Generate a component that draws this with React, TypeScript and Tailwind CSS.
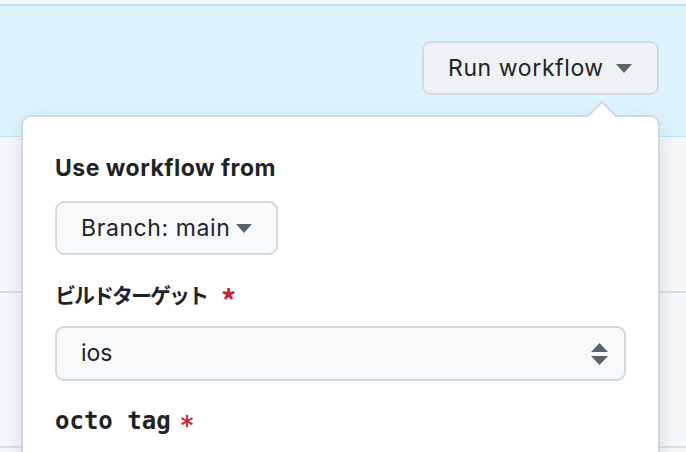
import React from 'react';

function Caret({ className = '' }: { className?: string }) {
  return (
    <svg width="16" height="9" viewBox="0 0 16 9" className={className}>
      <path d="M0 0h16L8 9z" fill="currentColor" />
    </svg>
  );
}

function SelectArrows() {
  return (
    <svg width="17" height="22" viewBox="0 0 17 22">
      <path d="M8.5 0L17 9H0z" fill="#59636e" />
      <path d="M0 13h17l-8.5 9z" fill="#59636e" />
    </svg>
  );
}

function Required() {
  return <span className="text-[#cf222e] text-[30px] leading-[0] relative top-[5px]">*</span>;
}

export default function App() {
  const sans = { fontFamily: 'Inter, "Liberation Sans", sans-serif' };

  return (
    <div className="relative w-[686px] h-[452px] overflow-hidden bg-[#f6f8fa] text-[#1f2328]" style={sans}>
      {/* top strip */}
      <div className="h-[6px] bg-[#f6f8fa] border-b-2 border-[#b6e3ff]" />

      {/* blue banner with trigger */}
      <div className="h-[131px] bg-[#ddf4ff] border-b border-[#b6e3ff] flex justify-end items-start pt-[35px] pr-[27px]">
        <button className="h-[54px] w-[237px] flex items-center justify-between pl-[24px] pr-[25px] rounded-[9px] bg-[#eff2f5] border-2 border-[#d1d9e0] text-[23px] tracking-[0.6px]">
          <span>Run workflow</span>
          <Caret className="text-[#59636e]" />
        </button>
      </div>

      {/* rows behind the popover */}
      <div className="h-[156px] border-b-2 border-[#d8dee4]" />
      <div className="h-[155px] border-b-2 border-[#d8dee4]" />

      {/* popover */}
      <div className="absolute left-[21px] top-[115px] w-[639px] h-[360px] bg-white rounded-[10px] border-2 border-[#d1d9e0] shadow-[0_8px_24px_rgba(66,74,83,0.15)]">
        {/* caret */}
        <svg width="30" height="16" viewBox="0 0 30 16" className="absolute -top-[16px] left-[564px]">
          <path d="M0 16L15 1l15 15" fill="white" stroke="#d1d9e0" strokeWidth="2" />
        </svg>

        <div className="pl-[32px] pr-[32px] pt-[37px] flex flex-col items-start">
          <div className="text-[23px] font-bold leading-[28px] tracking-[0.5px]">Use workflow from</div>

          <button className="mt-[19px] h-[54px] w-[223px] flex items-center pl-[24px] gap-[6px] rounded-[9px] bg-[#f6f8fa] border-2 border-[#d1d9e0] text-[23px] tracking-[0.6px]">
            <span>Branch: main</span>
            <Caret className="text-[#59636e]" />
          </button>

          <div
            className="mt-[25px] h-[28px] text-[21px] font-semibold leading-[28px] flex items-center gap-[14px]"
            style={{ fontFamily: '"Noto Sans CJK JP", sans-serif' }}
          >
            <span className="tracking-[-2px]">ビルドターゲット</span>
            <Required />
          </div>

          <div className="mt-[18px] h-[55px] w-full flex items-center justify-between pl-[24px] pr-[16px] rounded-[9px] bg-[#f6f8fa] border-2 border-[#d1d9e0] text-[23px]">
            <span>ios</span>
            <SelectArrows />
          </div>

          <div className="mt-[26px] h-[28px] flex items-center gap-[9px] leading-[28px]">
            <span className="text-[24px] font-bold" style={{ fontFamily: '"DejaVu Sans Mono", monospace' }}>
              octo tag
            </span>
            <Required />
          </div>
        </div>
      </div>
    </div>
  );
}
